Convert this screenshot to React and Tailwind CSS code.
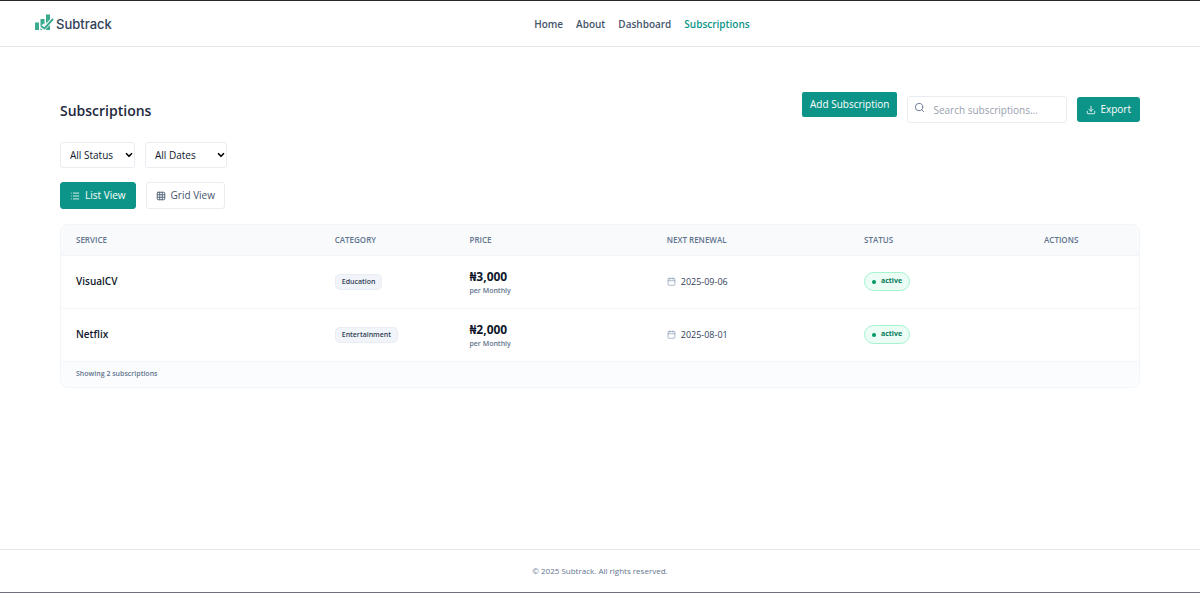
import { useState } from 'react'
import { Calendar, ChevronDown, Download, Grid3x3, List, Search } from 'lucide-react'
import clsx from 'clsx'

const navLinks = [
  { label: 'Home', href: '/' },
  { label: 'About', href: '/about' },
  { label: 'Dashboard', href: '/dashboard' },
  { label: 'Subscriptions', href: '/subscriptions', active: true },
]

const subscriptions = [
  { id: 1, name: 'VisualCV', category: 'Education', price: 3000, cycle: 'Monthly', renewal: '2025-09-06', status: 'active' },
  { id: 2, name: 'Netflix', category: 'Entertainment', price: 2000, cycle: 'Monthly', renewal: '2025-08-01', status: 'active' },
]

const columns = [
  { label: 'Service', width: 'w-[24%]' },
  { label: 'Category', width: 'w-[12.5%]' },
  { label: 'Price', width: 'w-[18.3%]' },
  { label: 'Next Renewal', width: 'w-[18.3%]' },
  { label: 'Status', width: 'w-[16.7%]' },
  { label: 'Actions', width: 'w-[10.2%]' },
]

function Logo() {
  return (
    <a href="/" className="flex items-start gap-0.5">
      <svg viewBox="0 0 40 34" className="h-[17px] w-5" fill="none" aria-hidden="true">
        <path d="M2 17h8v15H2zM13 10h8v11l-2-2-6 6zM13 28l4 4h-4zM24 1h8v10l-8 8z" fill="#3bab8f" />
        <path d="M24 32v-2l8-8v10z" fill="#3bab8f" />
        <path d="M14 24l7 5L38 10" stroke="#3bab8f" strokeWidth="4" />
      </svg>
      <span className="font-[Inter,sans-serif] text-[13px] leading-5 font-medium text-slate-700">Subtrack</span>
    </a>
  )
}

function Navbar() {
  return (
    <header className="flex h-[46px] items-center justify-between border-b border-gray-200 pt-px pr-7 pl-[34px]">
      <Logo />
      <nav className="flex gap-[13px] text-[10px] font-semibold text-slate-600">
        {navLinks.map((link) => (
          <a key={link.label} href={link.href} className={clsx(link.active && 'text-[#0d9488]')}>
            {link.label}
          </a>
        ))}
      </nav>
      <div />
    </header>
  )
}

function FilterSelect({ label, options, className }) {
  return (
    <div className={clsx('relative', className)}>
      <select
        aria-label={label}
        className="block h-[26px] w-full appearance-none rounded-[3px] border border-[#e9edf2] bg-white pl-[9px] text-[10px] text-slate-900 focus:outline-none"
      >
        {options.map((option) => (
          <option key={option}>{option}</option>
        ))}
      </select>
      <ChevronDown className="pointer-events-none absolute top-2 right-px size-[10px] text-black" strokeWidth={4} />
    </div>
  )
}

function SubscriptionTable({ items }) {
  return (
    <div className="mt-[15px] overflow-hidden rounded-lg border border-slate-100">
      <table className="w-full table-fixed text-left">
        <thead className="bg-slate-50">
          <tr className="h-[30px] border-b border-slate-100">
            {columns.map((col) => (
              <th
                key={col.label}
                className={clsx(col.width, 'pl-[15px] text-[8px] font-semibold text-slate-500 uppercase')}
              >
                {col.label}
              </th>
            ))}
          </tr>
        </thead>
        <tbody>
          {items.map((sub) => (
            <tr key={sub.id} className="h-[53px] border-b border-slate-100">
              <td className="pl-[15px] text-[10px] font-semibold text-slate-900">{sub.name}</td>
              <td className="pl-[15px]">
                <div className="flex">
                  <span className="flex h-4 items-center rounded-[5px] border border-slate-200/60 bg-slate-100 px-1.5 pt-px text-[7px] font-semibold text-slate-700">
                    {sub.category}
                  </span>
                </div>
              </td>
              <td className="pt-[5px] pl-[15px]">
                <div className="text-[12px] leading-[14px] font-bold text-slate-900">₦{sub.price.toLocaleString('en-US')}</div>
                <div className="text-[7px] leading-[14px] font-semibold text-slate-500">per {sub.cycle}</div>
              </td>
              <td className="pl-[15px]">
                <div className="flex items-center gap-[5px] text-[9px] font-medium text-slate-700">
                  <Calendar className="size-[9px] text-slate-400" />
                  {sub.renewal}
                </div>
              </td>
              <td className="pl-[15px]">
                <div className="flex">
                  <span className="flex h-[19px] items-center gap-[5px] rounded-full border border-emerald-200 bg-emerald-50 px-[7px] text-[7px] font-bold text-emerald-700">
                    <span className="size-1 rounded-full bg-emerald-600" />
                    {sub.status}
                  </span>
                </div>
              </td>
              <td />
            </tr>
          ))}
        </tbody>
      </table>
      <div className="flex h-[25px] items-center bg-slate-50/60 pt-px pl-[15px] text-[7px] font-semibold text-slate-500">
        Showing {items.length} subscriptions
      </div>
    </div>
  )
}

export default function App() {
  const [query, setQuery] = useState('')
  const [view, setView] = useState('list')

  const items = subscriptions.filter((s) => s.name.toLowerCase().includes(query.toLowerCase()))

  return (
    <div className="flex min-h-screen flex-col border-t border-b border-t-zinc-800 border-b-zinc-500 bg-white font-['Open_Sans','Noto_Sans',sans-serif]">
      <Navbar />

      <main className="flex-1 px-[60px] pt-[45px]">
        <div className="flex justify-between">
          <h1 className="pt-[9px] text-[14px] leading-5 font-semibold text-slate-800">Subscriptions</h1>
          <div className="flex items-start gap-2.5">
            <button type="button" className="h-[25px] rounded-[2px] bg-[#0d9488] px-2 text-[10px] text-white">
              Add Subscription
            </button>
            <div className="relative mt-1">
              <Search className="absolute top-[6px] left-[7px] size-[11px] text-slate-500" />
              <input
                type="text"
                aria-label="Search subscriptions"
                placeholder="Search subscriptions..."
                value={query}
                onChange={(e) => setQuery(e.target.value)}
                className="block h-[27px] w-40 rounded-[3px] border border-[#e9edf2] pl-[25px] text-[10px] placeholder:text-gray-400 focus:outline-none"
              />
            </div>
            <button
              type="button"
              className="mt-[5px] flex h-[25px] items-center gap-1 rounded-[3px] bg-[#0d9488] px-[9px] text-[10px] text-white"
            >
              <Download className="size-[10px]" />
              Export
            </button>
          </div>
        </div>

        <div className="mt-[19px] flex gap-2.5">
          <FilterSelect label="Status" options={['All Status', 'Active', 'Cancelled']} className="w-[75px]" />
          <FilterSelect label="Dates" options={['All Dates', 'This Week', 'This Month']} className="w-[82px]" />
        </div>

        <div className="mt-[14px] flex gap-2.5">
          {[
            { id: 'list', label: 'List View', Icon: List },
            { id: 'grid', label: 'Grid View', Icon: Grid3x3 },
          ].map(({ id, label, Icon }) => (
            <button
              key={id}
              type="button"
              onClick={() => setView(id)}
              className={clsx(
                'flex h-[27px] items-center gap-[5px] rounded-[3px] border px-[9px] text-[10px]',
                view === id ? 'border-[#0d9488] bg-[#0d9488] text-white' : 'border-[#e9edf2] bg-white text-slate-600',
              )}
            >
              <Icon className="size-[10px]" />
              {label}
            </button>
          ))}
        </div>

        <SubscriptionTable items={items} />
      </main>

      <footer className="flex h-[43px] items-center justify-center border-t border-gray-200 text-[8px] font-medium text-slate-500">
        © 2025 Subtrack. All rights reserved.
      </footer>
    </div>
  )
}
